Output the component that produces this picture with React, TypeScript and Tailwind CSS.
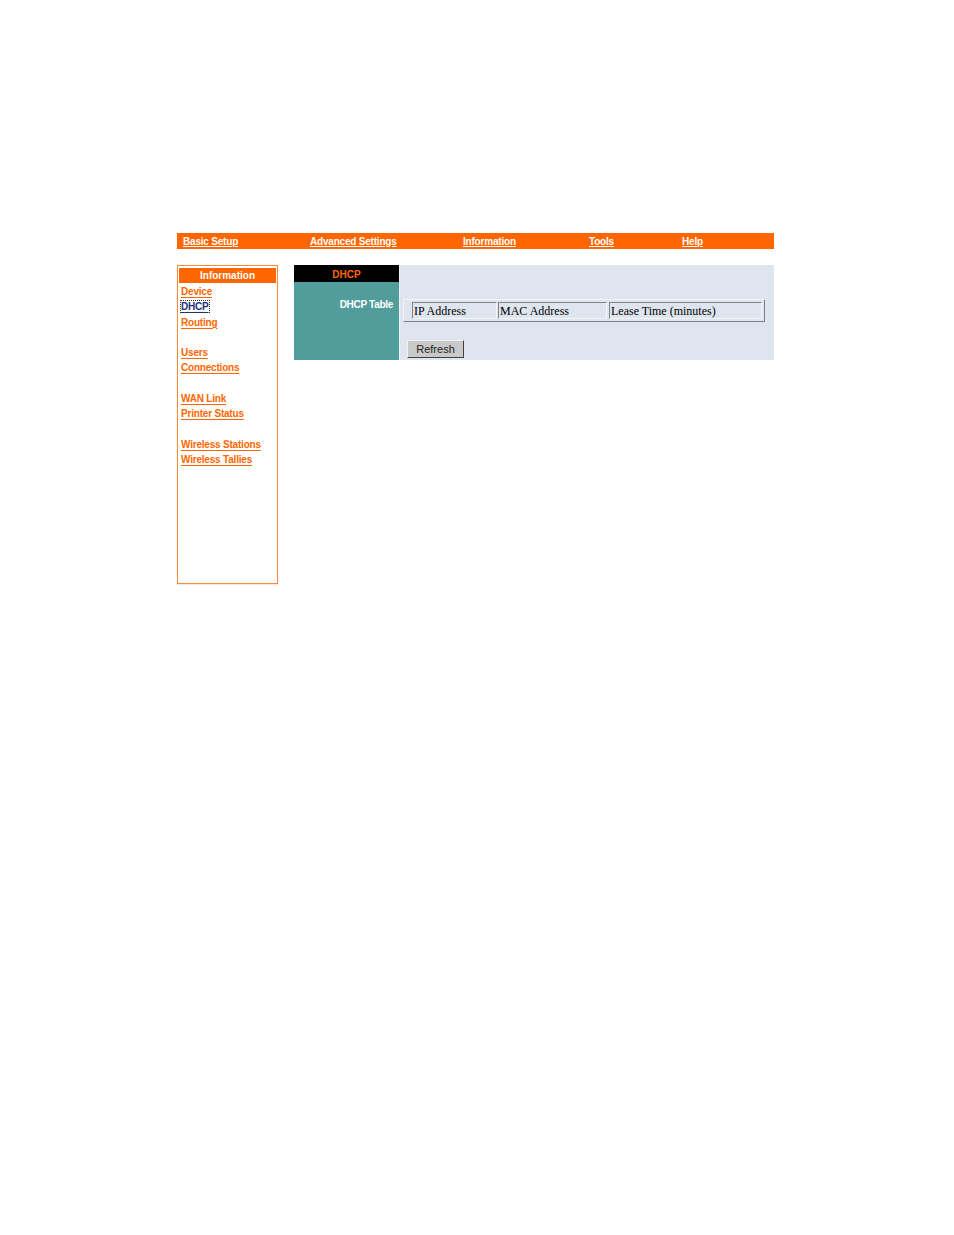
import React from 'react';

const navItems = [
  { label: 'Basic Setup', w: 'w-[127px]' },
  { label: 'Advanced Settings', w: 'w-[153px]' },
  { label: 'Information', w: 'w-[126px]' },
  { label: 'Tools', w: 'w-[93px]' },
  { label: 'Help', w: 'w-[98px]' },
];

const sideLinks: (string | null)[] = [
  'Device',
  'DHCP',
  'Routing',
  null,
  'Users',
  'Connections',
  null,
  'WAN Link',
  'Printer Status',
  null,
  'Wireless Stations',
  'Wireless Tallies',
];

const App: React.FC = () => {
  return (
    <div className="w-[954px] h-[1235px] bg-white pt-[233px] pl-[177px] font-['Liberation_Sans',Arial,sans-serif]">
      <div className="w-[597px]">
        {/* top navigation */}
        <div className="flex h-[16px] items-center bg-[#ff6600] pl-[6px] text-[10px] font-bold text-white">
          {navItems.map(n => (
            <div key={n.label} className={`${n.w} shrink-0`}>
              <span className="underline underline-offset-[1px] tracking-[-0.2px]">{n.label}</span>
            </div>
          ))}
        </div>

        <div className="mt-[16px] flex items-start">
          {/* sidebar */}
          <div className="w-[101px] h-[319px] shrink-0 bg-[#f58a3c] p-[1px] shadow-[0_1px_1px_rgba(240,150,90,0.25)]">
            <div className="h-full bg-white p-[1px]">
              <div className="mt-[1px] h-[15px] bg-[#ff6600] text-center text-[10px] font-bold leading-[15px] text-white">
                Information
              </div>
              <div className="pl-[2px] pt-[1px] text-[10px] font-bold leading-[15.3px] tracking-[-0.2px]">
                {sideLinks.map((l, i) =>
                  l === null ? (
                    <div key={i} className="h-[15.3px]" />
                  ) : (
                    <div key={i} className="h-[15.3px]">
                      {l === 'DHCP' ? (
                        <span className="text-[#22307e] underline underline-offset-[2px] outline outline-1 outline-dotted outline-[#333]">
                          {l}
                        </span>
                      ) : (
                        <span className="text-[#ff6600] underline underline-offset-[2px]">{l}</span>
                      )}
                    </div>
                  ),
                )}
              </div>
            </div>
          </div>

          {/* main panel */}
          <div className="ml-[16px] flex h-[95px] w-[480px]">
            <div className="flex w-[105px] shrink-0 flex-col">
              <div className="h-[17px] bg-black pt-[1px] text-center text-[10px] font-bold leading-[17px] text-[#ff6600]">
                DHCP
              </div>
              <div className="flex-1 bg-[#519d9c] pr-[6px] pt-[15px] text-right text-[10px] font-bold tracking-[-0.3px] text-white">
                DHCP Table
              </div>
            </div>
            <div className="flex-1 border-l border-[#eef2f7] bg-[#dee5ee] pl-[3px] pt-[34px]">
              <div className="flex w-[362px] h-[23px] items-center border border-t-[#f4f6f9] border-l-[#f4f6f9] border-b-[#7c8088] border-r-[#7c8088] pl-[8px] pr-[2px] font-['Liberation_Serif','Times_New_Roman',serif] text-[12px] text-black">
                <div className="flex h-[17px] w-[85px] items-center border border-t-[#80848c] border-l-[#80848c] border-b-[#f4f6f9] border-r-[#f4f6f9] pl-[1px]">
                  IP Address
                </div>
                <div className="ml-[1px] flex h-[17px] w-[109px] items-center border border-t-[#80848c] border-l-[#80848c] border-b-[#f4f6f9] border-r-[#f4f6f9] pl-[1px]">
                  MAC Address
                </div>
                <div className="ml-[2px] flex h-[17px] flex-1 items-center border border-t-[#80848c] border-l-[#80848c] border-b-[#f4f6f9] border-r-[#f4f6f9] pl-[1px]">
                  Lease Time (minutes)
                </div>
              </div>
              <button className="ml-[4px] mt-[18px] h-[18px] w-[57px] border border-t-[#f2f2f2] border-l-[#f2f2f2] border-b-[#404040] border-r-[#404040] bg-[#c9c9c9] text-[11px] leading-[16px] text-[#222] font-['Liberation_Sans',Arial,sans-serif]">
                Refresh
              </button>
            </div>
          </div>
        </div>
      </div>
    </div>
  );
};

export default App;
